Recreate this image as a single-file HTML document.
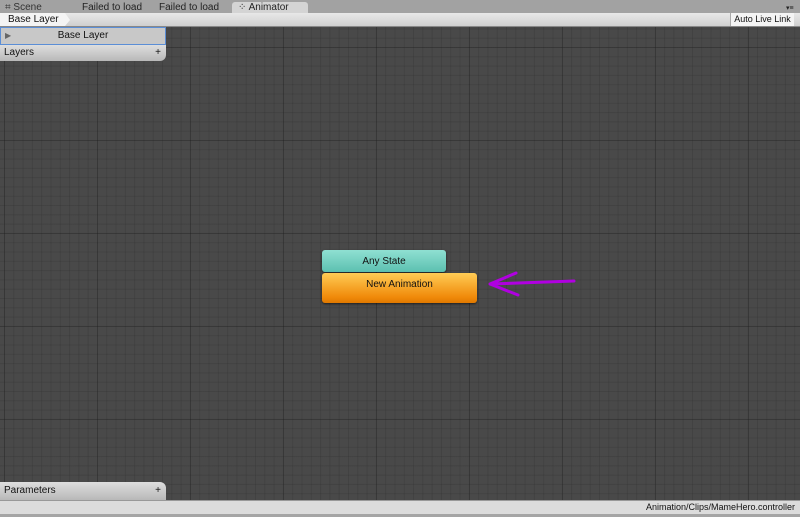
<!DOCTYPE html>
<html><head><style>
*{margin:0;padding:0;box-sizing:border-box}
body{width:800px;height:517px;overflow:hidden;background:#a5a5a5;font-family:"Liberation Sans",sans-serif;font-size:10px;color:#111;position:relative}
.tabs{position:absolute;left:0;top:0;width:800px;height:14px;background:#a2a2a2}
.tab{position:absolute;top:2px;height:12px;line-height:12px;font-size:10px;color:#222}
.tb{position:absolute;top:13px;left:0;width:800px;height:14px;background:linear-gradient(#e8e8e8,#cfcfcf);border-bottom:1px solid #888}
.canvas{position:absolute;left:0;top:27px;width:800px;height:473px;background-color:#494949;
background-image:
linear-gradient(90deg,rgba(30,30,30,.3) 1px,transparent 1px),
linear-gradient(rgba(30,30,30,.3) 1px,transparent 1px),
linear-gradient(90deg,rgba(35,35,35,.18) 1px,transparent 1px),
linear-gradient(rgba(35,35,35,.18) 1px,transparent 1px);
background-size:93px 93px,93px 93px,9.3px 9.3px,9.3px 9.3px;
background-position:4px 20px,4px 20px,4px 20px,4px 20px}
.status{position:absolute;left:0;top:500px;width:800px;height:14px;background:#dcdcdc;border-top:1px solid #999;font-size:9px;text-align:right;padding-right:5px;line-height:13px}
.node{position:absolute;border-radius:3px;text-align:center;font-size:10px;color:#111;box-shadow:0 1px 2px rgba(0,0,0,.6)}
</style></head><body>
<div class="tabs">
<div class="tab" style="left:5px;color:#333">⌗ Scene</div>
<div class="tab" style="left:82px">Failed to load</div>
<div class="tab" style="left:159px">Failed to load</div>
<div class="tab" style="left:232px;width:76px;height:12px;background:#d4d4d4;border-radius:3px 3px 0 0;padding-left:6px">⁘ Animator</div>
<div class="tab" style="left:786px;top:3px;font-size:7px">▾≡</div>
</div>
<div class="tb">
<div style="position:absolute;left:0;top:0;height:13px;width:70px;background:#f4f4f4;clip-path:polygon(0 0,65px 0,70px 7px,65px 13px,0 13px);padding-left:8px;line-height:13px">Base Layer</div>
<div style="position:absolute;right:6px;top:0;height:13px;width:64px;background:#f4f4f4;border-left:1px solid #aaa;line-height:13px;text-align:center;font-size:9px">Auto Live Link</div>
</div>
<div class="canvas"></div>
<div style="position:absolute;left:0;top:27px;width:166px;height:18px;background:#c8c8c8;border:1px solid #5b8ed6;line-height:16px;text-align:center;font-size:10px">
<span style="position:absolute;left:4px;color:#666;font-size:8px">▶</span>Base Layer</div>
<div style="position:absolute;left:0;top:45px;width:166px;height:16px;background:linear-gradient(#dedede,#b8b8b8);border-radius:0 0 6px 0;line-height:16px;padding-left:4px">Layers<span style="position:absolute;right:5px">+</span></div>
<div style="position:absolute;left:0;top:482px;width:166px;height:18px;background:linear-gradient(#dedede,#b8b8b8);border-radius:0 6px 0 0;line-height:17px;padding-left:4px">Parameters<span style="position:absolute;right:5px">+</span></div>
<div class="node" style="left:322px;top:250px;width:124px;height:22px;line-height:23px;background:linear-gradient(#8fe0d2,#5cc0b0)">Any State</div>
<div class="node" style="left:322px;top:273px;width:155px;height:30px;line-height:23px;background:linear-gradient(#ffcc55,#f08a0a 80%,#e07800)">New Animation</div>
<svg style="position:absolute;left:480px;top:268px" width="100" height="30">
<path d="M94 13 L10 16 M10 16 L36 5 M10 16 L38 27" stroke="#b000e0" stroke-width="3" fill="none" stroke-linecap="round"/>
</svg>
<div class="status">Animation/Clips/MameHero.controller</div>
</body></html>
